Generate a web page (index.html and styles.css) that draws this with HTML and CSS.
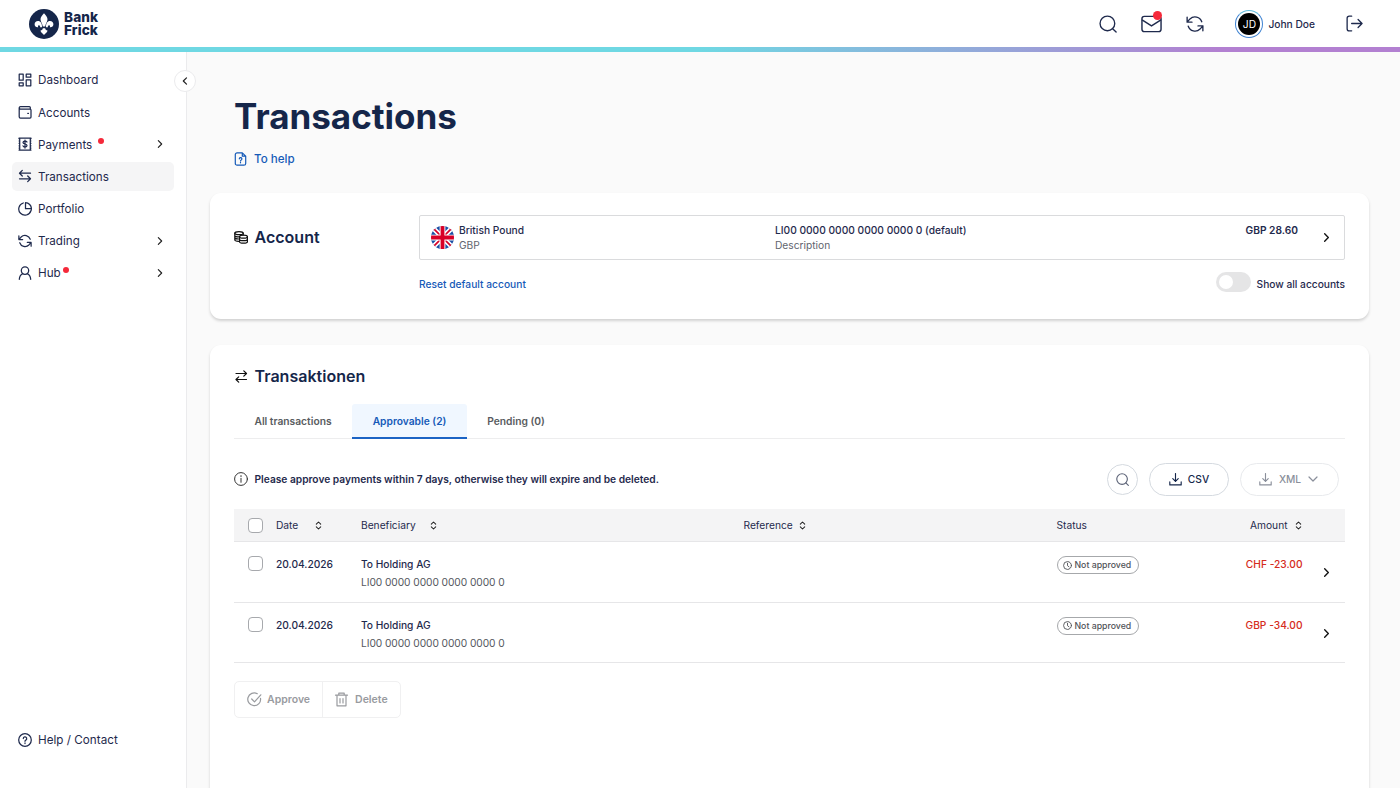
FILE: index.html
```html
<!DOCTYPE html>
<html lang="en">
<head>
<meta charset="utf-8">
<title>Transactions</title>
<link rel="stylesheet" href="styles.css">
</head>
<body>
<svg class="defs" width="0" height="0">
  <symbol id="refresh" viewBox="0 0 24 24"><path d="M1.500 3v6.500H8M22.500 21v-6.500H16M21 9A9.500 9.500 0 0 0 5.300 5.200L1.500 9.500M22.500 14.500l-3.800 4.300A9.500 9.500 0 0 1 3 15"/></symbol>
  <symbol id="search" viewBox="0 0 24 24"><circle cx="11.200" cy="11.200" r="9.800"/><path d="M18.200 18.200l4.600 4.600"/></symbol>
  <symbol id="chev" viewBox="0 0 24 24"><path d="M8 4l8 8-8 8"/></symbol>
  <symbol id="sort" viewBox="0 0 8 10"><path d="M1.500 3.500L4 1l2.500 2.500M1.500 6.500L4 9l2.500-2.500"/></symbol>
  <symbol id="download" viewBox="0 0 24 24"><path d="M12 1v14.500M7 10.500l5 5 5-5M1.500 16.500v5.500h21v-5.500"/></symbol>
  <symbol id="clock" viewBox="0 0 24 24"><circle cx="12" cy="12" r="10.500"/><path d="M12 6v6.500l4 3"/></symbol>
</svg>
<header class="header">
  <div class="logo">
    <svg class="logo-mark" viewBox="0 0 30 30"><circle cx="15" cy="15" r="15" fill="#15264a"/><g fill="#fff"><path d="M15 4.200c1.800 2.200 3.500 3.800 3.500 6 0 2.500-2 4.200-2.300 7.300h-2.400c-.3-3.100-2.300-4.800-2.300-7.300 0-2.200 1.700-3.800 3.500-6z"/><path d="M13 18.300c.2-3.700-1.300-6.300-4-6.300-2.100 0-3.400 1.500-3.400 3.300 0 2 1.700 3.300 3.600 2.900-.5-.9-.2-1.900.7-1.900 1.100 0 1.400 1 1.200 2zM17 18.300c-.2-3.700 1.300-6.300 4-6.300 2.100 0 3.400 1.500 3.400 3.300 0 2-1.700 3.300-3.600 2.900.5-.9.200-1.900-.7-1.900-1.100 0-1.400 1-1.200 2z"/><path d="M13.800 19.200h2.400c.1 1.300.9 2.100 2.300 2.200-.1 2-1.900 2.600-3.500 4.500-1.600-1.900-3.400-2.500-3.500-4.500 1.400-.1 2.200-.9 2.300-2.200z"/></g></svg>
    <div class="logo-text"><span>Bank</span><span>Frick</span></div>
  </div>
  <div class="tools">
    <svg class="ic tool"><use href="#search"/></svg>
    <span class="mail"><svg class="ic" viewBox="0 0 22 18"><rect x="1" y="1" width="20" height="16" rx="2.500"/><path d="M1.500 5L11 11l9.500-6"/></svg><i class="dot"></i></span>
    <svg class="ic tool"><use href="#refresh"/></svg>
    <div class="user"><span class="ring"><span class="avatar">JD</span></span><span class="name">John Doe</span></div>
    <svg class="ic logout" viewBox="0 0 18 18"><path d="M6 1.200H3.500A2.300 2.300 0 0 0 1.200 3.500v11a2.300 2.300 0 0 0 2.300 2.300H6M6 9h11M12.800 4.800L17 9l-4.200 4.200"/></svg>
  </div>
</header>
<div class="stripe"></div>
<div class="body">
  <aside class="sidebar">
    <button class="collapse"><svg class="ic" viewBox="0 0 8 10"><path d="M5.500 1.800L2.300 5l3.200 3.200"/></svg></button>
    <nav class="nav">
      <a class="item"><svg class="ic" viewBox="0 0 14 14"><path d="M1.200 1.200h4v6h-4zM1.200 9.800h4v3h-4zM8.200 1.200h4.600v3H8.200zM8.200 6.800h4.600v6H8.200z"/></svg><span>Dashboard</span></a>
      <a class="item"><svg class="ic" viewBox="0 0 14 14"><path d="M12.300 4V2.500a1 1 0 0 0-1-1H2.500a1.250 1.250 0 0 0 0 2.500H12a1 1 0 0 1 1 1v7a1 1 0 0 1-1 1H2.500a1.300 1.300 0 0 1-1.300-1.300V2.700M9.800 8.400h.6"/></svg><span>Accounts</span></a>
      <a class="item"><svg class="ic" viewBox="0 0 14 14"><path d="M1 1h12M1 13h12M1.700 1v12M12.300 1v12"/><path class="teeth" d="M1.200 1v12M12.800 1v12"/><path d="M9 5c-.4-.8-1.200-1-2-1-1.200 0-2 .6-2 1.500S6 6.800 7 7s2 .6 2 1.500S8.200 10 7 10c-.9 0-1.700-.3-2-1.100M7 3v8"/></svg><span>Payments</span><i class="dot"></i><svg class="ic arrow"><use href="#chev"/></svg></a>
      <a class="item active"><svg class="ic" viewBox="0 0 14 14"><path d="M12.500 4.200h-11M4.300 1.400L1.500 4.200 4.300 7M1.500 9.800h11M9.700 7l2.800 2.800-2.800 2.800"/></svg><span>Transactions</span></a>
      <a class="item"><svg class="ic" viewBox="0 0 14 14"><path d="M5.300 1A6.200 6.200 0 1 0 12.900 8.800M7.500.7v6h5.900A6 6 0 0 0 7.500.7zM13.400 6.700a6 6 0 0 1-.5 2.300"/></svg><span>Portfolio</span></a>
      <a class="item"><svg class="ic"><use href="#refresh"/></svg><span>Trading</span><svg class="ic arrow"><use href="#chev"/></svg></a>
      <a class="item"><svg class="ic" viewBox="0 0 14 14"><circle cx="7" cy="4.600" r="3.700"/><path d="M1.300 13.300c.3-3.200 1.700-4.900 3.500-5.600M12.700 13.300c-.3-3.200-1.700-4.900-3.500-5.600"/></svg><span>Hub</span><i class="dot near"></i><svg class="ic arrow"><use href="#chev"/></svg></a>
    </nav>
    <a class="item"><svg class="ic" viewBox="0 0 14 14"><circle cx="7" cy="7" r="6.300"/><path d="M5.300 5.600a1.700 1.700 0 1 1 2.500 1.500c-.6.300-.8.600-.8 1.200M7 9.900v.6"/></svg><span>Help / Contact</span></a>
  </aside>
  <main class="main">
    <h1 class="title">Transactions</h1>
    <a class="help"><svg class="ic" viewBox="0 0 12 14"><path d="M7.800.8H2.600A1.800 1.800 0 0 0 .8 2.600v8.800a1.800 1.800 0 0 0 1.800 1.800h6.800a1.800 1.800 0 0 0 1.800-1.800V4.200zM7.800.8v3.400h3.400M4.800 6.800a1.300 1.300 0 1 1 1.900 1.200c-.5.200-.6.500-.6.900M6 10.300v.5"/></svg><span>To help</span></a>
    <section class="card account">
      <h2 class="heading"><svg class="ic" viewBox="0 0 14 13"><ellipse cx="5" cy="2.200" rx="4.200" ry="1.500"/><path d="M.8 2.200v6.600c0 .9 1.700 1.500 4 1.500M.8 4.400c0 .9 1.700 1.400 4 1.400M.8 6.600c0 .9 1.700 1.400 4 1.400M9.200 2.200v1.700"/><ellipse cx="9.500" cy="5.700" rx="3.900" ry="1.500"/><path d="M5.600 5.700v5c0 .9 1.700 1.500 3.900 1.500s3.900-.6 3.900-1.500v-5M5.600 8.200c0 .9 1.700 1.500 3.900 1.500s3.900-.6 3.900-1.500"/></svg><span>Account</span></h2>
      <div class="account-body">
        <div class="select">
          <svg class="flag" viewBox="0 0 24 24"><clipPath id="round"><circle cx="12" cy="12" r="12"/></clipPath><g clip-path="url(#round)"><path fill="#1b4fa5" d="M0 0h24v24H0z"/><path stroke="#fff" stroke-width="5" d="M0 0l24 24M24 0L0 24"/><path stroke="#d80027" stroke-width="1.700" d="M0 0l24 24M24 0L0 24"/><path stroke="#fff" stroke-width="6" d="M12 0v24M0 12h24"/><path stroke="#d80027" stroke-width="4" d="M12 0v24M0 12h24"/></g></svg>
          <div class="pair currency"><span>British Pound</span><small>GBP</small></div>
          <div class="pair number"><span>LI00 0000 0000 0000 0000 0 (default)</span><small>Description</small></div>
          <div class="pair balance"><strong>GBP 28.60</strong></div>
          <svg class="ic go"><use href="#chev"/></svg>
        </div>
        <div class="options"><a class="reset">Reset default account</a><label class="switch"><i class="track"></i><span>Show all accounts</span></label></div>
      </div>
    </section>
    <section class="card list">
      <h2 class="heading"><svg class="ic" viewBox="0 0 14 13"><path d="M2 3.500h10.500M9.800.8l2.700 2.700-2.700 2.700M12.500 9.500H2M4.700 6.800L2 9.500l2.700 2.700"/></svg><span>Transaktionen</span></h2>
      <div class="tabs"><a class="tab t1">All transactions</a><a class="tab on">Approvable (2)</a><a class="tab t3">Pending (0)</a></div>
      <div class="toolbar">
        <svg class="ic info" viewBox="0 0 14 14"><circle cx="7" cy="7" r="6.400"/><path d="M7 6.300v4M7 3.600v1"/></svg><span class="notice">Please approve payments within 7 days, otherwise they will expire and be deleted.</span>
        <button class="pill find"><svg class="ic"><use href="#search"/></svg></button>
        <button class="pill csv"><svg class="ic"><use href="#download"/></svg><span>CSV</span></button>
        <button class="pill xml"><svg class="ic"><use href="#download"/></svg><span>XML</span><svg class="ic down" viewBox="0 0 10 6"><path d="M1 1l4 4 4-4"/></svg></button>
      </div>
      <div class="table">
        <div class="row head"><i class="box"></i><span class="c-date">Date<svg class="ic sort s1"><use href="#sort"/></svg></span><span>Beneficiary<svg class="ic sort s2"><use href="#sort"/></svg></span><span>Reference<svg class="ic sort"><use href="#sort"/></svg></span><span>Status</span><span class="amount-head">Amount<svg class="ic sort s3"><use href="#sort"/></svg></span></div>
        <div class="row"><i class="box"></i><span class="date">20.04.2026</span><div class="who"><b>To Holding AG</b><small>LI00 0000 0000 0000 0000 0</small></div><span></span><span class="badge"><svg class="ic"><use href="#clock"/></svg><span>Not approved</span></span><span class="amount">CHF -23.00</span><svg class="ic go"><use href="#chev"/></svg></div>
        <div class="row"><i class="box"></i><span class="date">20.04.2026</span><div class="who"><b>To Holding AG</b><small>LI00 0000 0000 0000 0000 0</small></div><span></span><span class="badge"><svg class="ic"><use href="#clock"/></svg><span>Not approved</span></span><span class="amount">GBP -34.00</span><svg class="ic go"><use href="#chev"/></svg></div>
      </div>
      <div class="actions">
        <button class="act"><svg class="ic" viewBox="0 0 15 15"><path d="M13.500 6.300A6.400 6.400 0 1 1 10.300 1.700M4.700 7l2.800 2.800 6.300-7"/></svg><span>Approve</span></button>
        <button class="act del"><svg class="ic" viewBox="0 0 15 15"><path d="M1.500 3.200h12M4.800 3V1.200h5.400V3M3 3.400v10.400h9V3.400M6 6.500v4.500M9 6.500v4.500"/></svg><span>Delete</span></button>
      </div>
    </section>
  </main>
</div>
</body>
</html>
```
FILE: styles.css
```css
* { box-sizing: border-box; }
body { margin: 0; height: 788px; overflow: hidden; font-family: Inter, "Liberation Sans", sans-serif; font-size: 10.210px; color: #1f2a4d; background: #fafafa; }
h1, h2 { margin: 0; }
span, a, b, small, strong { white-space: nowrap; }
button { font: inherit; color: inherit; background: #fff; padding: 0; border: 1px solid #d5dae0; }
.defs { position: absolute; }
.ic { display: block; flex: none; fill: none; stroke: currentColor; stroke-width: 1.2; stroke-linecap: round; stroke-linejoin: round; }
.dot { display: block; background: #f5293a; border-radius: 50%; }

.header { height: 47px; background: #fff; display: flex; justify-content: space-between; align-items: center; padding: 0 37px 0 29px; }
.logo { display: flex; gap: 5px; align-items: center; }
.logo-mark { width: 30px; height: 30px; }
.logo-text { display: flex; flex-direction: column; font-size: 13.600px; font-weight: 800; line-height: 13px; color: #15264a; letter-spacing: .1px; }
.tools { display: flex; align-items: center; }
.tool { width: 18px; height: 18px; stroke-width: 1.8; }
.mail { position: relative; margin: 0 24px; }
.mail .ic { width: 21px; height: 18px; stroke-width: 1.5; }
.mail .dot { position: absolute; width: 9px; height: 9px; right: 0; top: -4px; }
.user { display: flex; align-items: center; gap: 5px; margin: 0 31px 0 31px; }
.ring { width: 28px; height: 28px; border-radius: 50%; border: 1.500px solid #3f83d2; border-top-color: #63bddd; display: flex; align-items: center; justify-content: center; }
.avatar { width: 22px; height: 22px; border-radius: 50%; background: #000; color: #fff; font-size: 10.210px; line-height: 22px; text-align: center; }
.name { font-weight: 500; }
.logout { width: 17px; height: 17px; stroke-width: 1.4; }
.stripe { height: 5px; background: linear-gradient(90deg, #6fd8e3 0 50%, #b280d1 87%); }

.body { display: flex; height: 736px; }
.sidebar { position: relative; width: 187px; background: #fff; border-right: 1px solid #ebebed; padding: 14px 12px 34px; display: flex; flex-direction: column; justify-content: space-between; }
.collapse { position: absolute; left: 174px; top: 18px; width: 22px; height: 22px; border-radius: 50%; border-color: #ebebed; display: flex; align-items: center; justify-content: center; color: #222; }
.collapse .ic { width: 8px; height: 10px; }
.nav { display: flex; flex-direction: column; gap: 4px; }
.item { height: 28.150px; display: flex; align-items: center; padding: 0 9px 0 6px; font-size: 11.670px; letter-spacing: .02px; border-radius: 5px; }
.item span { padding-top: .6px; }
.item.active { background: #f5f5f6; }
.item .ic { width: 14px; height: 14px; margin-right: 6px; stroke-width: 1.250; }
.item use { stroke-width: 2.100; }
.item .teeth { stroke-width: 1.200; stroke-dasharray: 1.200 1.200; stroke-linecap: butt; }
.item .arrow { width: 10px; height: 10px; margin: 0 0 0 auto; color: #222; }
.item .arrow use { stroke-width: 2.800; }
.item .dot { width: 6px; height: 6px; margin: -6px 0 0 6px; }
.item .dot.near { margin-left: 2px; }

.main { flex: 1; padding: 42px 31px 0 23px; display: flex; flex-direction: column; }
.title { font-size: 35px; line-height: 44px; font-weight: 700; color: #15264a; margin-left: 24px; }
.help { display: flex; align-items: center; gap: 7px; height: 16px; margin: 13px 0 26px 24px; color: #155ab8; font-size: 11.600px; font-weight: 500; }
.help .ic { width: 13px; height: 14px; }
.card { background: #fff; border-radius: 11px; box-shadow: 0 2px 3px rgba(0,0,0,.16); padding: 22px 24px; }
.account { height: 126px; display: flex; }
.heading { display: flex; align-items: center; gap: 6.500px; height: 22px; font-size: 16.050px; font-weight: 600; color: #15264a; }
.heading .ic { width: 14px; height: 13px; color: #111; }
.account .heading { width: 185px; margin-top: 11px; }
.account-body { flex: 1; }
.select { height: 45px; border: 1px solid #dadbdd; border-radius: 2px; display: flex; align-items: center; padding: 0 12px 0 11px; }
.flag { width: 23px; height: 23px; margin-right: 5px; }
.pair { display: flex; flex-direction: column; height: 30px; line-height: 15px; font-weight: 500; }
.pair small { font-size: 10.210px; font-weight: 400; color: #61656e; }
.currency { width: 316px; }
.number { flex: 1; }
.balance strong { font-weight: 600; }
.go { width: 11px; height: 11px; stroke-width: 3; color: #111; }
.select .go { margin-left: 23px; }
.options { display: flex; justify-content: space-between; align-items: center; height: 20px; margin-top: 12px; }
.reset { color: #155ab8; font-weight: 500; padding-top: 3px; letter-spacing: .02px; }
.switch { display: flex; gap: 6px; align-items: center; font-weight: 500; }
.switch span { padding-top: 3px; }
.track { width: 35px; height: 20px; border-radius: 10px; background: #e5e5e6; padding: 3px; }
.track::before { content: ""; display: block; width: 14px; height: 14px; border-radius: 50%; background: #fff; }

.list { margin-top: 26px; flex: 1; border-radius: 11px 11px 0 0; padding-top: 20px; }
.tabs { display: flex; height: 35px; margin-top: 17px; border-bottom: 1px solid #ededee; font-weight: 600; color: #595c60; font-size: 10.250px; line-height: 34px; }
.tab { text-align: center; width: 118px; }
.tab.on { width: 115px; height: 35px; background: #f0f7ff; color: #155ab8; border-bottom: 2px solid #1b63c4; border-radius: 3px 3px 0 0; }
.tab.t3 { width: 98px; }
.toolbar { display: flex; align-items: center; margin: 23px 6px 0 0; height: 34px; }
.info { width: 14px; height: 14px; stroke-width: 1; color: #333; }
.notice { flex: 1; font-weight: 600; margin-left: 6.500px; }
.pill { height: 33px; border-radius: 17px; display: flex; align-items: center; font-weight: 500; color: #15264a; }
.pill .ic { width: 13px; height: 13px; stroke-width: 2.1; }
.find { width: 31px; height: 31px; justify-content: center; margin-right: 11px; color: #5d6478; }
.csv { width: 80px; justify-content: center; gap: 6px; margin-right: 11px; }
.xml { width: 99px; justify-content: center; gap: 7px; padding-right: 2px; color: #8a8f9b; border-color: #e8eaed; }
.pill .down { width: 10px; height: 6px; stroke-width: 1.2; }
.table { margin-top: 13px; }
.row { display: grid; grid-template-columns: 28px 85px 382.500px 313px 157.500px 88.500px 1fr; padding-left: 14px; height: 60.500px; border-bottom: 1px solid #e6e6e8; align-items: start; padding-top: 13.400px; }
.head { height: 33px; padding-top: 0; align-items: center; background: #f4f4f5; }
.head span { display: flex; align-items: center; font-weight: 400; }
.sort { width: 7px; height: 9px; stroke-width: 1.2; margin-left: 6px; color: #222; }
.s1 { margin-left: 16.500px; }
.s2 { margin-left: 14px; }
.s3 { margin-left: 7px; }
.head .amount-head { justify-content: flex-end; padding-right: 1px; }
.box { width: 15px; height: 15px; border: 1px solid #a7a9ad; border-radius: 4px; background: #fff; margin-top: 1px; }
.head .box { margin-top: 0; }
.date, .amount { line-height: 17px; margin-top: 1px; font-weight: 500; }
.who { display: flex; flex-direction: column; margin-top: 1px; line-height: 19px; }
.who b { font-weight: 500; line-height: 17px; }
.who small { font-size: 10.210px; color: #55585e; letter-spacing: -.06px; }
.badge { justify-self: start; display: flex; align-items: center; gap: 3px; width: 82px; height: 18px; margin: 1px 0 0; border: 1px solid #a6a8ab; border-radius: 9px; padding-left: 5px; color: #505257; font-size: 8.750px; font-weight: 500; }
.badge .ic { width: 9px; height: 9px; stroke-width: 2.4; }
.amount { color: #d52b20; text-align: right; font-weight: 450; }
.row .go { margin: 12px 0 0 18.500px; }
.actions { display: inline-flex; border: 1px solid #f0f0f1; border-radius: 5px; height: 37px; margin-top: 18px; color: #999b9f; font-weight: 600; font-size: 10.500px; }
.act { border: 0; background: none; display: flex; align-items: center; gap: 5px; padding: 0 12px; }
.act.del { border-left: 1px solid #f0f0f1; padding-left: 11px; gap: 6px; }
.act .ic { width: 15px; height: 15px; }
```
